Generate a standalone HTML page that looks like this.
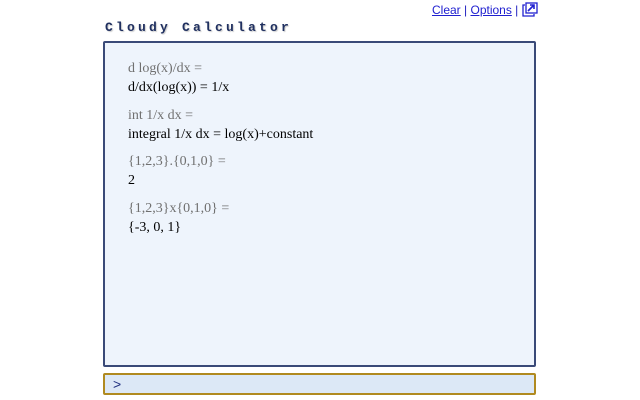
<!DOCTYPE html>
<html><head><style>
body{margin:0;width:640px;height:400px;background:#fff;position:relative;overflow:hidden}
.links{position:absolute;top:2px;left:432px;font:12px "Liberation Sans",sans-serif;color:#2020c0}
.links a{color:#2020d0;text-decoration:underline}
.title{position:absolute;left:105px;top:20px;font:bold 13px "Liberation Mono",monospace;letter-spacing:3.2px;color:#203060;text-shadow:1px 1px 1px #ccc}
.box{position:absolute;left:103px;top:41px;width:429px;height:322px;border:2px solid #3a4a78;border-radius:2px;background:#eef4fc}
.in{position:absolute;left:103px;top:373px;height:18px;border:2px solid #b08a20;border-radius:2px;background:#dce8f6;font:14px "Liberation Sans",sans-serif;color:#203080;padding-left:8px;line-height:19px;width:421px}
.g{position:absolute;left:128px;font:14px "Liberation Serif",serif;line-height:19px}
.q{color:#707070}.r{color:#000}
</style></head><body>
<div class="links"><a>Clear</a> | <a>Options</a> | <svg width="16" height="15" viewBox="0 0 16 15" style="vertical-align:-3px"><path d="M3 3H1V14H12V12" fill="none" stroke="#2020d0" stroke-width="1.3"/><rect x="4" y="1" width="11" height="10" fill="none" stroke="#2020d0" stroke-width="1.3"/><path d="M6 9L12 3M8 3H12V7" fill="none" stroke="#2020d0" stroke-width="1.6"/></svg></div>
<div class="title">Cloudy Calculator</div>
<div class="box"></div>
<div class="g" style="top:59px"><div class="q">d log(x)/dx =</div><div class="r">d/dx(log(x)) = 1/x</div></div>
<div class="g" style="top:106px"><div class="q">int 1/x dx =</div><div class="r">integral 1/x dx = log(x)+constant</div></div>
<div class="g" style="top:152px"><div class="q">{1,2,3}.{0,1,0} =</div><div class="r">2</div></div>
<div class="g" style="top:199px"><div class="q">{1,2,3}x{0,1,0} =</div><div class="r">{-3, 0, 1}</div></div>
<div class="in">&gt;</div>
</body></html>
